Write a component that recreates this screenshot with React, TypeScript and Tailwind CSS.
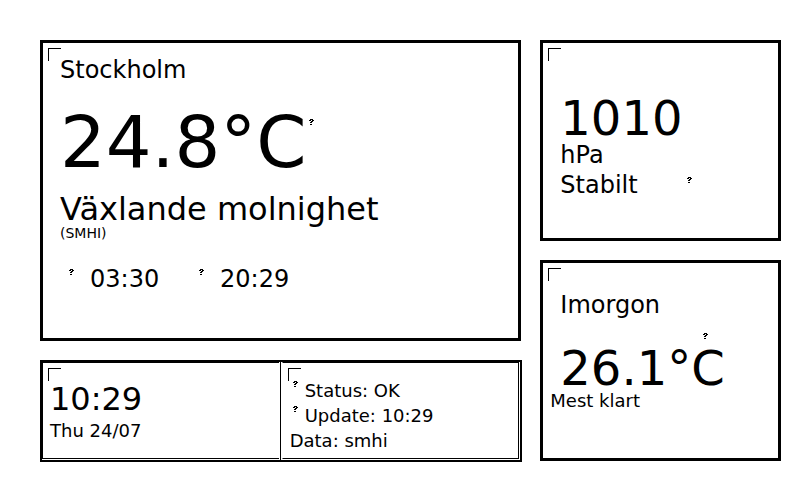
import type { ReactNode } from "react";

function Corner() {
  return <span aria-hidden="true" className="absolute top-[5px] left-[5px] size-[13px] border-t border-l border-black" />;
}

/* Placeholder glyph shown when a weather symbol is unavailable */
function Missing() {
  return (
    <svg role="img" aria-label="?" viewBox="0 0 5 6" className="h-[6px] w-[5px] shrink-0" shapeRendering="crispEdges">
      <path d="M1 0h3v1h-3zM0 1h2v1h-2zM3 1h2v1h-2zM2 2h2v1h-2zM1 3h2v1h-2zM1 5h2v1h-2z" fill="black" />
    </svg>
  );
}

function Panel({ className, children }: { className: string; children: ReactNode }) {
  return <section className={`relative border-3 border-black ${className}`}>{children}</section>;
}

export default function App() {
  return (
    <main className="grid min-h-screen grid-cols-[2fr_1fr] items-start gap-[19px] bg-white pt-10 pr-[19px] pb-[18px] pl-10 font-['DejaVu_Sans',sans-serif] text-black">
      <div className="flex flex-col gap-[19px]">
        <Panel className="min-h-[301px] px-[17px] pt-3">
          <Corner />
          <h1 className="text-2xl leading-[30px]">Stockholm</h1>
          <div className="mt-4 flex items-start gap-0.5">
            <p className="text-[72px] leading-[82px]">24.8°C</p>
            <div className="pt-[18px]"><Missing /></div>
          </div>
          <p className="mt-2 text-[32px] leading-9">Växlande molnighet</p>
          <p className="text-sm leading-3">(SMHI)</p>
          <div className="mt-6 flex text-2xl leading-8">
            <div className="flex w-[130px] gap-4 pl-[9px]">
              <div className="pt-1.5"><Missing /></div>
              <time>03:30</time>
            </div>
            <div className="flex gap-4 pl-[9px]">
              <div className="pt-1.5"><Missing /></div>
              <time>20:29</time>
            </div>
          </div>
        </Panel>
        <div className="-mr-px flex h-[102px] border-2 border-black">
          <section className="relative mb-px flex-1 border-t border-b border-l border-black pt-[18px] pl-[7px]">
            <Corner />
            <time className="block text-[32px] leading-9">10:29</time>
            <p className="mt-px text-lg leading-[25px]">Thu 24/07</p>
          </section>
          <div className="mx-px w-px bg-black" />
          <section className="relative mr-px mb-px flex-1 border border-black border-l-white pt-[15px] pl-[7px] text-lg leading-[25px]">
            <Corner />
            <p className="flex gap-[7px] pl-[3px]"><span className="flex pt-[3px]"><Missing /></span>Status: OK</p>
            <p className="flex gap-[7px] pl-[3px]"><span className="flex pt-[3px]"><Missing /></span>Update: 10:29</p>
            <p>Data: smhi</p>
          </section>
        </div>
      </div>
      <div className="flex flex-col gap-[19px]">
        <Panel className="min-h-[201px] px-[17px] pt-[53px]">
          <Corner />
          <p className="text-5xl leading-11">1010</p>
          <p className="text-2xl leading-[30px]">hPa</p>
          <div className="flex text-2xl leading-[30px]">
            <p className="w-[127px]">Stabilt</p>
            <div className="pt-[7px]"><Missing /></div>
          </div>
        </Panel>
        <Panel className="min-h-[201px] px-[17px] pt-[27px]">
          <Corner />
          <h2 className="text-2xl leading-[30px]">Imorgon</h2>
          <div className="mt-[13px] pl-[143px]"><Missing /></div>
          <p className="mt-[7px] text-5xl leading-11">26.1°C</p>
          <p className="-ml-[10px] text-lg leading-[22px]">Mest klart</p>
        </Panel>
      </div>
    </main>
  );
}
